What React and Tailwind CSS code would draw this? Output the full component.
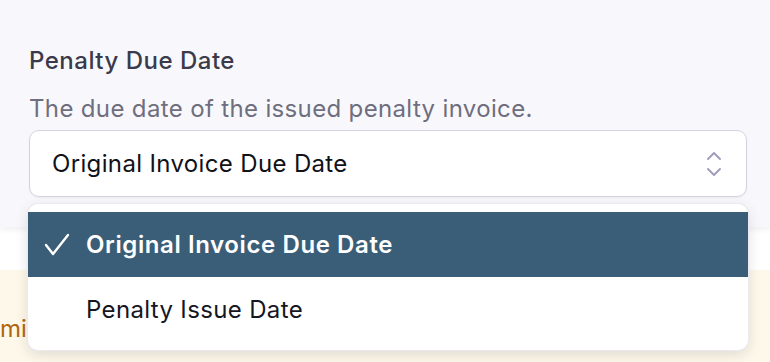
import React from "react";

const font = { fontFamily: "Inter, 'Noto Sans', sans-serif" };

const ChevronUpDown = () => (
  <svg width="18" height="28" viewBox="0 0 18 28" fill="none" stroke="#a29eba" strokeWidth="2" strokeLinecap="round" strokeLinejoin="round">
    <path d="M3 9l6-6 6 6" />
    <path d="M3 19l6 6 6-6" />
  </svg>
);

const Check = () => (
  <svg width="26" height="23" viewBox="0 0 26 23" fill="none" stroke="#ffffff" strokeWidth="2.4" strokeLinecap="round" strokeLinejoin="round">
    <path d="M2 12l7 9L24 2" />
  </svg>
);

const options = ["Original Invoice Due Date", "Penalty Issue Date"];

export default function App() {
  const selected = 0;

  return (
    <div className="relative w-[770px] h-[362px] overflow-hidden bg-white" style={font}>
      <div className="h-[227px] bg-[#f8f8fc] px-[29px] pt-[46px] shadow-[0_2px_6px_rgba(30,30,60,0.08)] relative z-10">
        <div className="text-[24px] leading-[30px] font-medium tracking-[0.5px] text-[#3b3a4b]">Penalty Due Date</div>
        <div className="mt-[18px] text-[24px] leading-[30px] tracking-[0.35px] text-[#6f6e7e]">
          The due date of the issued penalty invoice.
        </div>
        <div className="mt-[6px] flex items-center justify-between h-[67px] w-[718px] rounded-[10px] border border-[#d5d3e0] bg-white pl-[22px] pr-[23px] shadow-[0_1px_2px_rgba(0,0,0,0.05)]">
          <span className="text-[24px] tracking-[0.35px] text-[#111118]">Original Invoice Due Date</span>
          <ChevronUpDown />
        </div>
      </div>

      <div className="h-[43px] bg-white" />
      <div className="h-[92px] bg-[#fdf8e9] pt-[44px]">
        <span className="text-[24px] leading-[30px] text-[#b1650f]">mir</span>
      </div>

      <div className="absolute left-[28px] top-[204px] z-20 w-[720px] rounded-[10px] bg-white py-[8px] shadow-[0_4px_14px_rgba(30,30,60,0.14)] ring-1 ring-[#ebeaf2]">
        {options.map((opt, i) => (
          <div
            key={opt}
            className={
              i === selected
                ? "flex h-[65px] items-center bg-[#3a5e77] text-white font-semibold tracking-[0.6px]"
                : "flex h-[65px] items-center text-[#16161f] tracking-[0.35px]"
            }
          >
            <div className="w-[58px] flex pl-[16px]">{i === selected && <Check />}</div>
            <span className="text-[24px]">{opt}</span>
          </div>
        ))}
      </div>
    </div>
  );
}
